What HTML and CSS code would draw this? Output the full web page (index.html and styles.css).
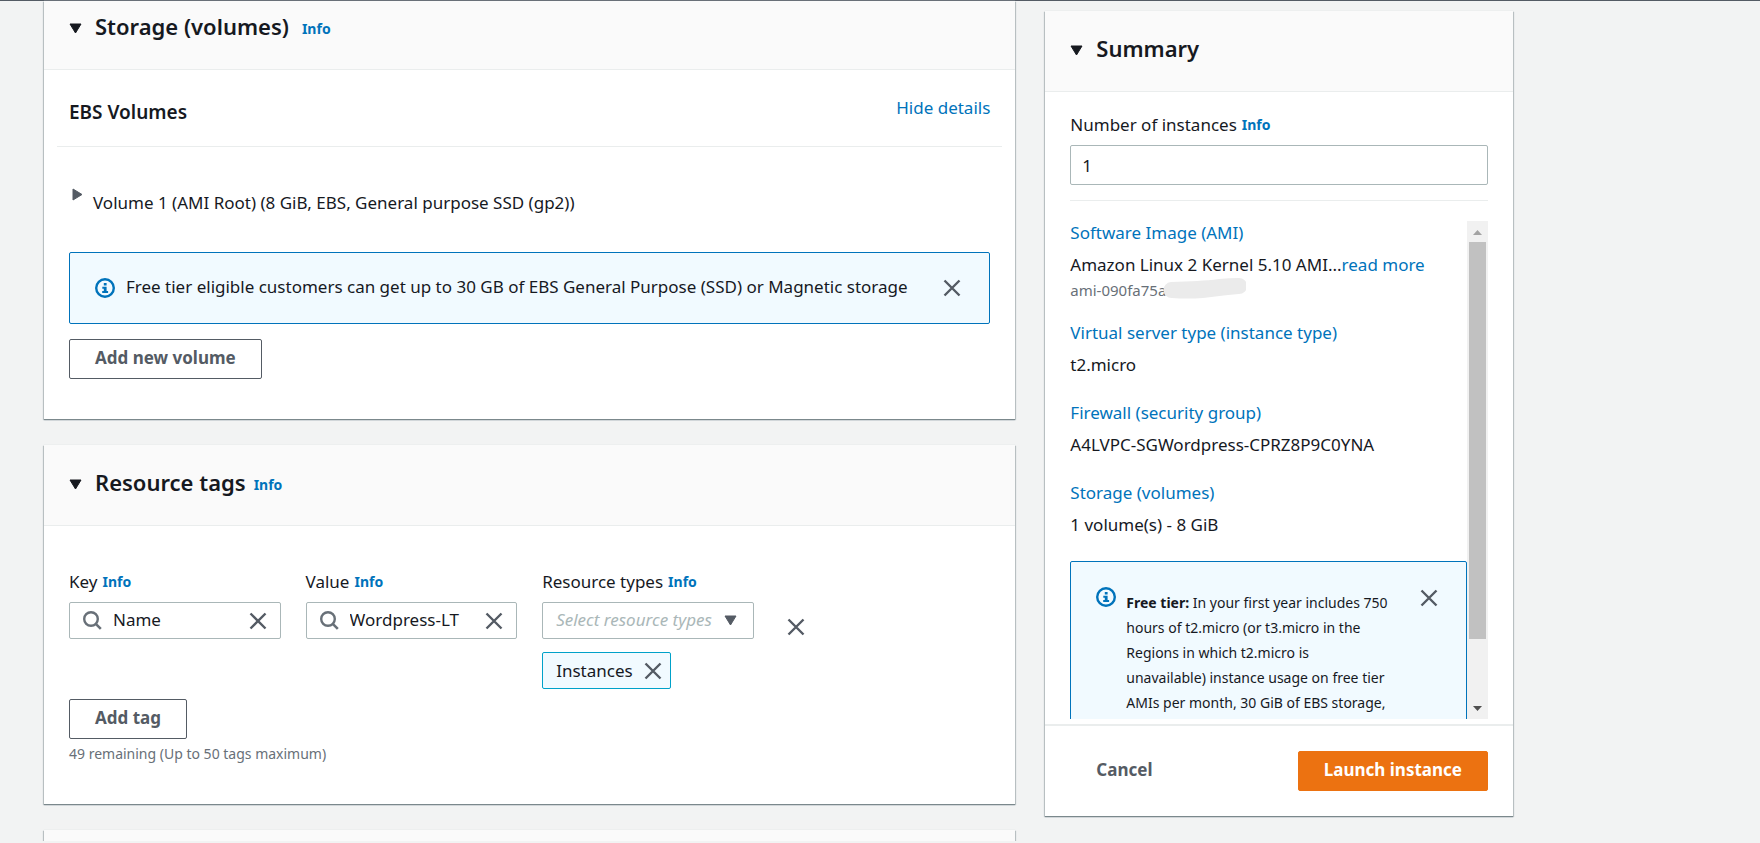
FILE: index.html
```html
<!DOCTYPE html>
<html lang="en">
<head>
<meta charset="utf-8">
<title>Launch an instance</title>
<link rel="stylesheet" href="styles.css">
</head>
<body>
<svg class="defs" aria-hidden="true">
  <symbol id="close" viewBox="0 0 18 18"><path d="M1.5 1.5l15 15M16.500 1.500l-15 15" fill="none" stroke="#545b64" stroke-width="2.4"/></symbol>
  <symbol id="info" viewBox="0 0 20 20"><circle cx="10" cy="10" r="8.800" fill="none" stroke="#0073bb" stroke-width="2.400"/><path d="M8.800 5h2.800v2.400H8.800zM7.300 8.800h4.300v4.300h1.500V15H7.200v-1.900h1.600v-2.400H7.300z" fill="#0073bb"/></symbol>
  <symbol id="search" viewBox="0 0 19 19"><circle cx="8" cy="8" r="6.800" fill="none" stroke="#687078" stroke-width="2.400"/><path d="M12.800 12.800l5 5" stroke="#687078" stroke-width="2.600"/></symbol>
  <symbol id="down" viewBox="0 0 13 11"><path d="M1 1h11L6.500 10z" fill="currentColor" stroke="currentColor" stroke-linejoin="round"/></symbol>
  <symbol id="right" viewBox="0 0 11 13"><path d="M1 1v11l9-5.500z" fill="currentColor" stroke="currentColor" stroke-linejoin="round"/></symbol>
</svg>
<div class="topbar"></div>
<div class="layout">
  <main class="main">
    <section class="panel">
      <header class="panel-head panel-head-cut">
        <svg class="caret"><use href="#down"/></svg>
        <h2 class="title">Storage (volumes)</h2>
        <a class="info info-wide" href="#">Info</a>
      </header>
      <div class="storage-body">
        <div class="ebs-row">
          <h3 class="subtitle">EBS Volumes</h3>
          <a class="link" href="#">Hide details</a>
        </div>
        <button class="volume" type="button"><svg class="caret-right"><use href="#right"/></svg><span>Volume 1 (AMI Root) (8 GiB, EBS, General purpose SSD (gp2))</span></button>
        <div class="alert">
          <svg class="info-icon"><use href="#info"/></svg>
          <p class="alert-text">Free tier eligible customers can get up to 30 GB of EBS General Purpose (SSD) or Magnetic storage</p>
          <button class="icon-btn" type="button" aria-label="Dismiss"><svg class="x"><use href="#close"/></svg></button>
        </div>
        <button class="btn" type="button">Add new volume</button>
      </div>
    </section>

    <section class="panel">
      <header class="panel-head">
        <svg class="caret"><use href="#down"/></svg>
        <h2 class="title">Resource tags</h2>
        <a class="info" href="#">Info</a>
      </header>
      <div class="tags-body">
        <div class="tags-grid">
          <div class="field">
            <div class="label-row"><label for="key">Key</label><a class="info" href="#">Info</a></div>
            <div class="combo">
              <svg class="search"><use href="#search"/></svg>
              <input class="combo-input" id="key" type="text" value="Name">
              <button class="icon-btn" type="button" aria-label="Clear key"><svg class="x"><use href="#close"/></svg></button>
            </div>
          </div>
          <div class="field">
            <div class="label-row"><label for="value">Value</label><a class="info" href="#">Info</a></div>
            <div class="combo">
              <svg class="search"><use href="#search"/></svg>
              <input class="combo-input" id="value" type="text" value="Wordpress-LT">
              <button class="icon-btn" type="button" aria-label="Clear value"><svg class="x"><use href="#close"/></svg></button>
            </div>
          </div>
          <div class="field">
            <div class="label-row"><label for="types">Resource types</label><a class="info" href="#">Info</a></div>
            <div class="select-wrap">
              <select class="select" id="types"><option>Select resource types</option></select>
              <svg class="caret select-caret"><use href="#down"/></svg>
            </div>
            <div class="chip">Instances<button class="icon-btn" type="button" aria-label="Remove Instances"><svg class="x"><use href="#close"/></svg></button></div>
          </div>
          <div class="remove"><button class="icon-btn" type="button" aria-label="Remove tag"><svg class="x"><use href="#close"/></svg></button></div>
        </div>
        <button class="btn" type="button">Add tag</button>
        <p class="hint">49 remaining (Up to 50 tags maximum)</p>
      </div>
    </section>

    <section class="panel">
      <header class="panel-head panel-head-peek"></header>
    </section>
  </main>

  <aside class="panel summary">
    <header class="panel-head">
      <svg class="caret"><use href="#down"/></svg>
      <h2 class="title">Summary</h2>
    </header>
    <div class="summary-body">
      <div class="label-row"><label for="count">Number of instances</label><a class="info" href="#">Info</a></div>
      <input class="count" id="count" type="text" value="1">
      <div class="scroller">
        <div class="scroll-content">
          <div class="item item-first">
            <a class="link" href="#">Software Image (AMI)</a>
            <div>Amazon Linux 2 Kernel 5.10 AMI...<a class="link" href="#">read more</a></div>
            <div class="ami"><span>ami-090fa75a</span><svg class="smudge" viewBox="0 0 83 21"><path d="M8 4C28 3 42 3 56 1Q66 0 76 0A8 8 0 0 1 76 16C60 17 52 19 40 20Q24 21 9 20A8 8 0 0 1 8 4z" fill="#ebebeb"/></svg></div>
          </div>
          <div class="item"><a class="link" href="#">Virtual server type (instance type)</a><div>t2.micro</div></div>
          <div class="item"><a class="link" href="#">Firewall (security group)</a><div>A4LVPC-SGWordpress-CPRZ8P9C0YNA</div></div>
          <div class="item"><a class="link" href="#">Storage (volumes)</a><div>1 volume(s) - 8 GiB</div></div>
          <div class="alert alert-tall">
            <svg class="info-icon"><use href="#info"/></svg>
            <p class="tier-text"><b>Free tier:</b> In your first year includes 750 hours of t2.micro (or t3.micro in the Regions in which t2.micro is unavailable) instance usage on free tier AMIs per month, 30 GiB of EBS storage,</p>
            <button class="icon-btn" type="button" aria-label="Dismiss"><svg class="x"><use href="#close"/></svg></button>
          </div>
        </div>
        <div class="scrollbar" aria-hidden="true">
          <svg class="arrow" viewBox="0 0 21 21"><path d="M6 14l4.500-5L15 14z" fill="#a3a3a3"/></svg>
          <div class="track"><div class="thumb"></div></div>
          <svg class="arrow" viewBox="0 0 21 21"><path d="M6 8l4.500 5L15 8z" fill="#505050"/></svg>
        </div>
      </div>
    </div>
    <footer class="actions">
      <button class="btn btn-plain" type="button">Cancel</button>
      <button class="btn btn-primary" type="button">Launch instance</button>
    </footer>
  </aside>
</div>
</body>
</html>
```

FILE: styles.css
```css
* { box-sizing: border-box; }
body {
  margin: 0;
  background: #f2f3f3;
  color: #16191f;
  font: 17px/24px "Noto Sans", "Open Sans", sans-serif;
}
h2, h3, p { margin: 0; }
button, input, select { font: inherit; color: inherit; }
svg { display: block; flex: none; }
.defs { position: absolute; width: 0; height: 0; }
.topbar { height: 1px; background: #545b64; }
.layout {
  display: grid;
  grid-template-columns: minmax(0, 27fr) minmax(0, 13fr);
  gap: 30px;
  align-items: start;
  padding: 0 247px 0 44px;
}
.main { display: flex; flex-direction: column; gap: 26px; }
.panel {
  background: #fff;
  box-shadow: 0 1px 1px 0 #7b888c, 1px 1px 1px 0 #c4cacc, -1px 1px 1px 0 #c4cacc, 0 0 1px #d5dbdb;
}
.panel-head {
  display: flex;
  align-items: center;
  height: 81px;
  padding: 0 25px 6px;
  background: #fafafa;
  border-bottom: 1px solid #eaeded;
}
.panel-head-cut { height: 69px; padding-bottom: 18px; }
.panel-head-peek { height: 11px; padding: 0; border: 0; }
.caret { width: 13px; height: 11px; margin: 4px 13px 0 0; }
.title { font-size: 22px; line-height: 28px; font-weight: 600; }
.subtitle { font-size: 19px; line-height: 24px; font-weight: 600; }
.info { margin-left: 5px; font-size: 14px; font-weight: 700; color: #0073bb; text-decoration: none; }
.panel-head .info { margin-left: 8px; padding-top: 6px; }
.panel-head .info-wide { margin-left: 13px; }
.link { color: #0073bb; text-decoration: none; }

.storage-body { padding: 0 25px 40px; }
.ebs-row {
  display: flex;
  justify-content: space-between;
  margin: 0 -12px;
  padding: 26px 12px 22px;
  border-bottom: 1px solid #eaeded;
}
.ebs-row .subtitle { padding-top: 4px; }
.volume {
  display: flex;
  gap: 10px;
  padding: 41px 0 37px 3px;
  border: 0;
  background: none;
  text-align: left;
}
.volume span { padding-top: 3px; }
.caret-right { width: 11px; height: 13px; color: #545b64; }
.alert {
  display: flex;
  align-items: center;
  min-height: 72px;
  padding: 0 20px 0 25px;
  background: #f1faff;
  border: 1px solid #0073bb;
  border-radius: 2px;
}
.info-icon { width: 20px; height: 20px; }
.alert-text { flex: 1; padding: 0 0 2px 11px; }
.icon-btn {
  display: grid;
  place-items: center;
  flex: none;
  width: 34px;
  height: 34px;
  padding: 0;
  border: 0;
  background: none;
}
.x { width: 18px; height: 18px; }
.btn {
  height: 40px;
  padding: 0 25px 3px;
  border: 1px solid #545b64;
  border-radius: 2px;
  background: #fff;
  color: #545b64;
  font-weight: 700;
}
.storage-body .btn { margin-top: 15px; }

.tags-body { padding: 44px 25px 38px; }
.tags-grid { display: grid; grid-template-columns: repeat(4, minmax(0, 1fr)); gap: 25px; margin-bottom: 10px; }
.label-row { display: flex; align-items: center; margin-bottom: 8px; }
.combo, .select-wrap {
  display: flex;
  align-items: center;
  height: 37px;
  border: 1px solid #aab7b8;
  border-radius: 2px;
  background: #fff;
}
.combo { padding: 0 5px 0 13px; }
.search { width: 19px; height: 19px; }
.combo-input { flex: 1; min-width: 0; padding: 0 0 2px 11px; border: 0; background: none; }
.select-wrap { position: relative; }
.select {
  width: 100%;
  height: 100%;
  padding: 0 30px 2px 13px;
  appearance: none;
  border: 0;
  background: none;
  color: #aab7b8;
  font-style: italic;
}
.select-caret { position: absolute; right: 16px; margin: 0; color: #545b64; pointer-events: none; }
.chip {
  display: inline-flex;
  align-items: center;
  gap: 3px;
  height: 37px;
  margin-top: 13px;
  padding-left: 13px;
  border: 1px solid #00a1c9;
  border-radius: 2px;
  background: #f1faff;
}
.remove { padding-top: 40px; }
.hint { padding-top: 3px; font-size: 14px; color: #687078; }

.summary { margin-top: 10px; }
.summary-body { padding: 21px 25px 5px; }
.count {
  display: block;
  width: 100%;
  height: 40px;
  padding: 0 11px;
  border: 1px solid #aab7b8;
  border-radius: 2px;
}
.scroller {
  display: flex;
  height: 519px;
  margin-top: 15px;
  padding-top: 20px;
  border-top: 1px solid #eaeded;
}
.scroll-content { flex: 1; min-width: 0; overflow: hidden; line-height: 32px; }
.item { height: 80px; margin-top: -4px; margin-bottom: 4px; }
.item-first { height: 100px; }
.item .link { display: inline-block; }
.ami { position: relative; font-size: 15px; line-height: 18px; color: #687078; }
.smudge { position: absolute; left: 93px; top: -3px; width: 83px; height: 21px; }
.alert-tall { align-items: flex-start; height: 220px; padding: 25px 20px 0 25px; }
.alert-tall .icon-btn { margin-top: -6px; }
.tier-text { flex: 1; padding: 3px 22px 0 10px; font-size: 14px; line-height: 25px; }
.scrollbar { display: flex; flex-direction: column; width: 21px; background: #f1f1f1; }
.arrow { width: 21px; height: 21px; }
.track { flex: 1; padding: 0 2px; }
.thumb { height: 87%; background: #c1c1c1; }
.actions {
  display: flex;
  justify-content: space-between;
  padding: 25px;
  border-top: 2px solid #eaeded;
}
.btn-plain { border-color: transparent; }
.btn-primary { border-color: #ec7211; background: #ec7211; color: #fff; }
```
